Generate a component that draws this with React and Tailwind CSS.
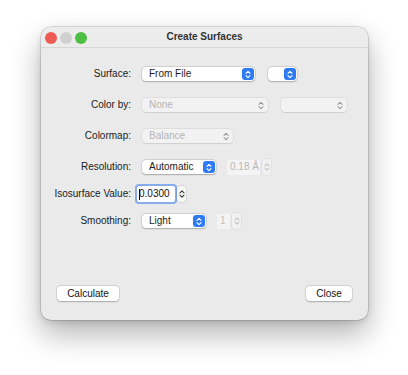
import React from 'react'

const font = { fontFamily: '"Liberation Sans", Arial, sans-serif' }

/* Up/down chevrons used inside popups and steppers */
function Chevrons({ color = 'white', w = 6, h = 9 }) {
  return (
    <svg width={w} height={h} viewBox="0 0 6 9" fill="none" stroke={color} strokeWidth="1.1" strokeLinecap="round" strokeLinejoin="round">
      <polyline points="1,3.3 3,1.3 5,3.3" />
      <polyline points="1,5.7 3,7.7 5,5.7" />
    </svg>
  )
}

function Popup({ label, width, disabled }) {
  return (
    <div
      className={
        'h-[14px] rounded-[4px] flex items-center justify-between pl-[7px] pr-[1px] ' +
        (disabled
          ? 'bg-[#f2f2f2] text-[#b5b5b5] shadow-[0_0_0_0.5px_rgba(0,0,0,0.08),0_0.5px_1px_rgba(0,0,0,0.08)]'
          : 'bg-white text-[#1d1d1d] shadow-[0_0_0_0.5px_rgba(0,0,0,0.14),0_0.5px_1.5px_rgba(0,0,0,0.22)]')
      }
      style={{ width }}
    >
      <span className="text-[10px] leading-none">{label}</span>
      {disabled ? (
        <span className="w-[12px] h-[12px] flex items-center justify-center">
          <Chevrons color="#9a9a9a" />
        </span>
      ) : (
        <span className="w-[12px] h-[12px] rounded-[3px] bg-[#2f7bf5] flex items-center justify-center">
          <Chevrons />
        </span>
      )}
    </div>
  )
}

function Stepper({ disabled }) {
  return (
    <div
      className={
        'w-[9px] h-[16px] flex items-center justify-center rounded-[3px] ml-[2px] ' +
        (disabled ? 'bg-[#f1f1f1] shadow-[0_0_0_0.5px_rgba(0,0,0,0.08)]' : 'bg-[#f7f7f7] shadow-[0_0_0_0.5px_rgba(0,0,0,0.16)]')
      }
    >
      <Chevrons color={disabled ? '#c2c2c2' : '#3a3a3a'} w={6} h={12} />
    </div>
  )
}

function Row({ label, children, className = '' }) {
  return (
    <div className={'flex items-center h-[16px] ' + className}>
      <div className="w-[90px] text-right text-[10px] leading-none text-[#1a1a1a] whitespace-nowrap">{label}</div>
      <div className="flex items-center ml-[11px]">{children}</div>
    </div>
  )
}

function Button({ children, width }) {
  return (
    <div
      className="h-[15px] rounded-[4px] bg-white flex items-center justify-center text-[10px] leading-none text-[#111] shadow-[0_0_0_0.5px_rgba(0,0,0,0.14),0_0.5px_1.5px_rgba(0,0,0,0.22)]"
      style={{ width }}
    >
      {children}
    </div>
  )
}

export default function App() {
  return (
    <div className="w-[408px] h-[375px] bg-white pt-[27px] pl-[41px] overflow-hidden" style={font}>
      <div className="w-[327px] h-[293px] rounded-[10px] bg-[#eaeaea] flex flex-col overflow-hidden shadow-[0_0_0_0.5px_rgba(0,0,0,0.22),0_14px_30px_rgba(0,0,0,0.3),0_2px_6px_rgba(0,0,0,0.12)]">
        {/* Title bar */}
        <div className="h-[21px] relative flex items-center justify-center bg-[#ececec] border-b border-[#d6d6d6]">
          <div className="absolute left-[4px] top-[5px] flex gap-[3px]">
            <span className="w-[12px] h-[12px] rounded-full bg-[#ee5b52]" />
            <span className="w-[12px] h-[12px] rounded-full bg-[#d0d0d0]" />
            <span className="w-[12px] h-[12px] rounded-full bg-[#4fbf44]" />
          </div>
          <span className="text-[10px] font-bold text-[#333] leading-none">Create Surfaces</span>
        </div>

        {/* Body */}
        <div className="flex-1 flex flex-col pt-[18px]">
          <Row label="Surface:">
            <Popup label="From File" width={113} />
            <div className="ml-[13px]">
              <Popup label="" width={29} />
            </div>
          </Row>

          <Row label="Color by:" className="mt-[15px]">
            <Popup label="None" width={126} disabled />
            <div className="ml-[13px]">
              <Popup label="" width={66} disabled />
            </div>
          </Row>

          <Row label="Colormap:" className="mt-[15px]">
            <Popup label="Balance" width={91} disabled />
          </Row>

          <Row label="Resolution:" className="mt-[15px]">
            <Popup label="Automatic" width={74} />
            <div className="ml-[11px] w-[33px] h-[15px] bg-[#f4f4f4] flex items-center pl-[3px] text-[10px] leading-none text-[#b8b8b8]">
              0.18 Å
            </div>
            <Stepper disabled />
          </Row>

          <Row label="Isosurface Value:" className="mt-[11px]">
            <div className="-ml-[5px] w-[38px] h-[16px] bg-white rounded-[2px] ring-[2px] ring-[#86acee] flex items-center pl-[2px] text-[10px] leading-none text-[#111]">
              <span className="w-px h-[11px] bg-black -mr-px" />
              0.0300
            </div>
            <Stepper />
          </Row>

          <Row label="Smoothing:" className="mt-[11px]">
            <Popup label="Light" width={64} />
            <div className="ml-[11px] w-[13px] h-[15px] bg-[#f4f4f4] flex items-center pl-[3px] text-[10px] leading-none text-[#c0c0c0]">
              1
            </div>
            <Stepper disabled />
          </Row>

          <div className="flex-1" />

          <div className="flex justify-between px-[16px] pb-[19px]">
            <Button width={62}>Calculate</Button>
            <Button width={46}>Close</Button>
          </div>
        </div>
      </div>
    </div>
  )
}
